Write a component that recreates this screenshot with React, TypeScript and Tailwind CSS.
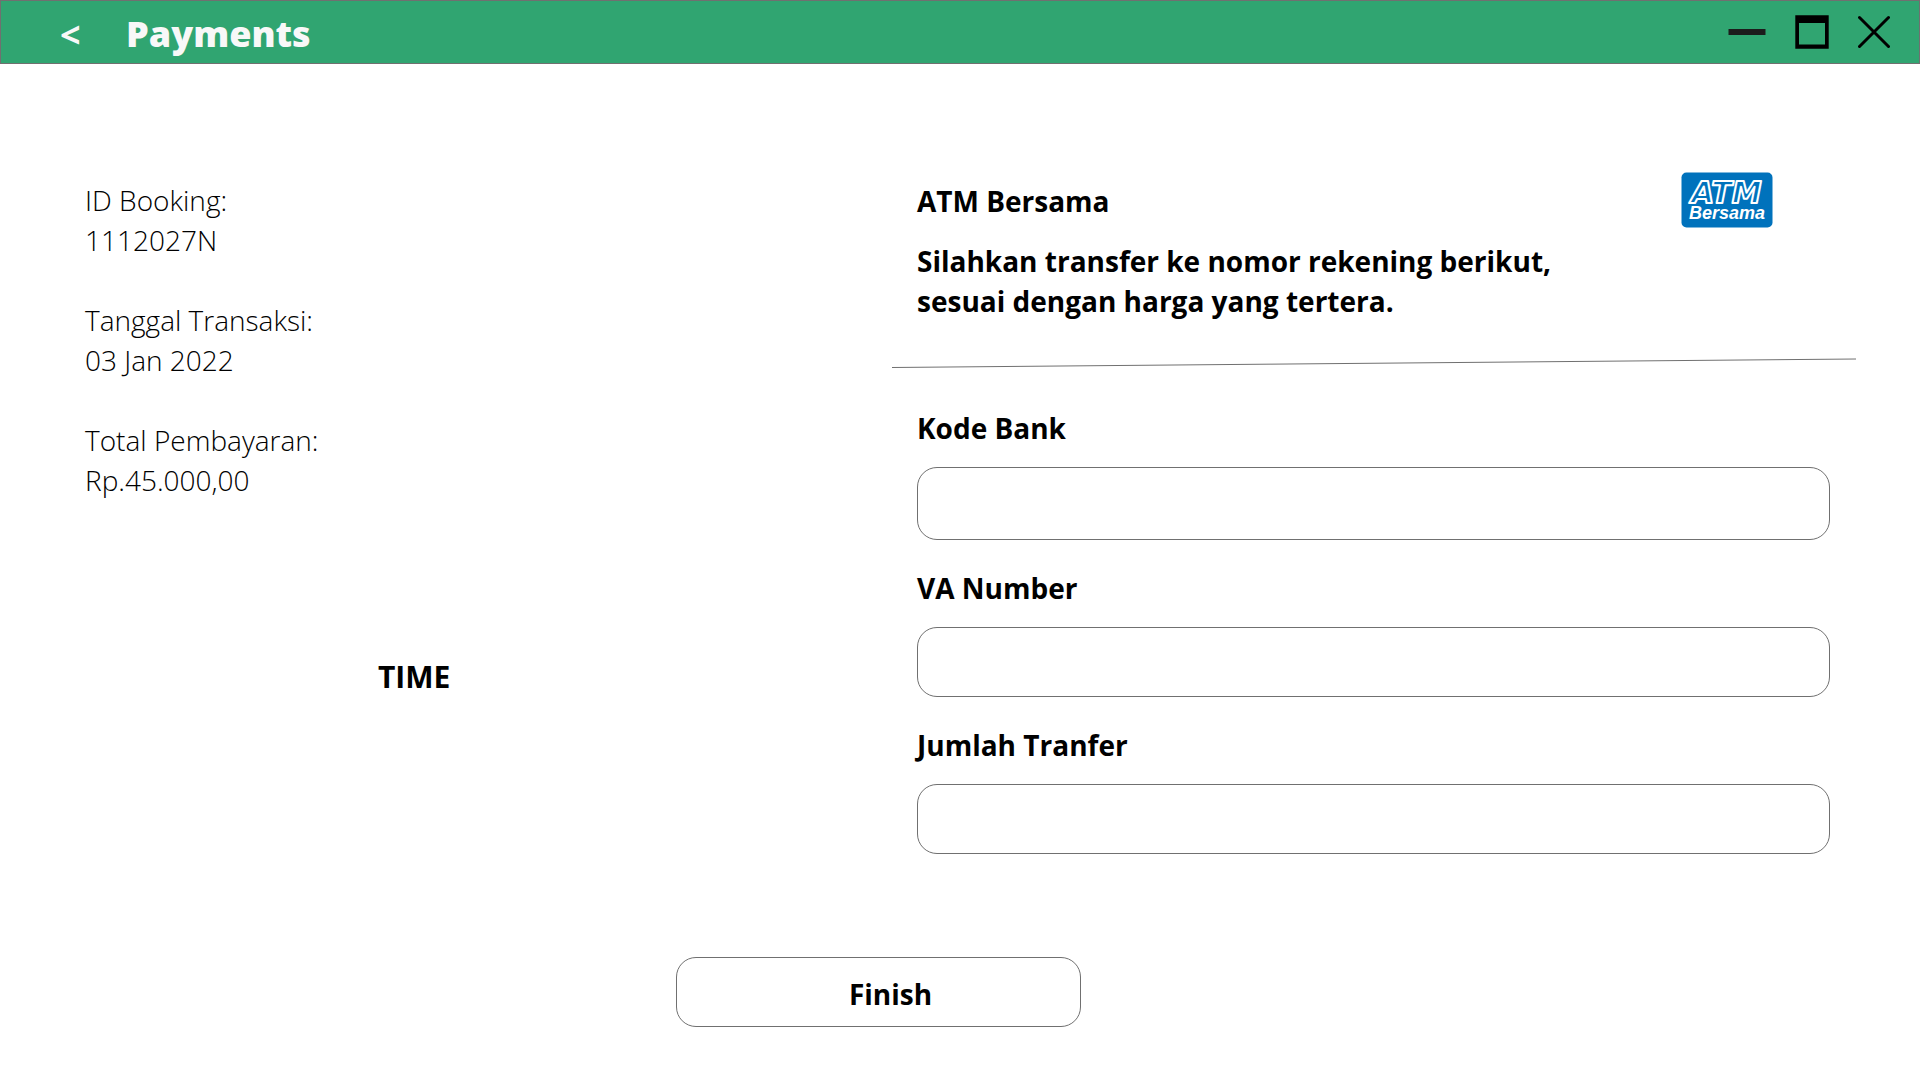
import React from "react";

const details = [
  { label: "ID Booking:", value: "1112027N" },
  { label: "Tanggal Transaksi:", value: "03 Jan 2022" },
  { label: "Total Pembayaran:", value: "Rp.45.000,00" },
];

const fields = [
  { id: "kode-bank", label: "Kode Bank", height: "h-[73px]" },
  { id: "va-number", label: "VA Number", height: "h-[70px]" },
  { id: "jumlah-transfer", label: "Jumlah Tranfer", height: "h-[70px]" },
];

function TitleBar() {
  return (
    <header className="flex h-16 items-center border border-[#707070] bg-[#30a571] pr-[29px] pl-[59px] text-[#f8f8f8]">
      <button type="button" aria-label="Back" className="w-[66px] pt-[6px] text-left text-[36px] leading-10 font-bold">
        &lt;
      </button>
      <h1 className="pt-1 text-[36px] leading-[56px] font-extrabold">Payments</h1>
      <div className="ml-auto flex items-center gap-[29px]">
        <button type="button" aria-label="Minimize">
          <svg width="38" height="34" viewBox="0 0 38 34" className="block">
            <rect x="0.5" y="14" width="37" height="6" fill="#1c1c1c" />
          </svg>
        </button>
        <button type="button" aria-label="Maximize">
          <svg width="34" height="34" viewBox="0 0 34 34" className="block">
            <path fillRule="evenodd" d="M0.3 0.3h33.4v33.4h-33.4zM4 8v21.5h26V8z" fill="#000" />
          </svg>
        </button>
        <button type="button" aria-label="Close">
          <svg width="32" height="34" viewBox="0 0 32 34" className="block">
            <path d="M1.5 2.5l29 29M30.5 2.5l-29 29" fill="none" stroke="#000" strokeWidth="3" strokeLinecap="round" />
          </svg>
        </button>
      </div>
    </header>
  );
}

function BankLogo() {
  return (
    <svg width="92" height="56" viewBox="0 0 92 56" role="img" aria-label="ATM Bersama" className="block">
      <rect x="0.5" y="0.5" width="91" height="55" rx="5" fill="#0072bc" />
      <text
        x="10"
        y="31"
        fontFamily="'DejaVu Sans', sans-serif"
        fontStyle="italic"
        fontWeight="bold"
        fontSize="30"
        fill="#0072bc"
        stroke="#fff"
        strokeWidth="2"
        strokeLinejoin="round"
      >
        ATM
      </text>
      <text
        x="8"
        y="47"
        fontFamily="'Liberation Sans', Arial, sans-serif"
        fontStyle="italic"
        fontWeight="bold"
        fontSize="18"
        fill="#fff"
      >
        Bersama
      </text>
    </svg>
  );
}

export default function App() {
  return (
    <div className="min-h-screen bg-white font-['Open_Sans','Noto_Sans',sans-serif] text-[28px] leading-10 text-black">
      <TitleBar />
      <main>
        <div className="grid grid-cols-[892fr_1028fr]">
          <section className="pt-[116px] pl-[85px]">
            <dl className="flex flex-col gap-10 font-light">
              {details.map((d) => (
                <div key={d.label}>
                  <dt>{d.label}</dt>
                  <dd>{d.value}</dd>
                </div>
              ))}
            </dl>
            <p className="mt-[157px] pl-[293px] text-[30px] font-bold">TIME</p>
          </section>

          <section className="pt-[108px] pr-16">
            <div className="flex items-start justify-between pr-[83px] pl-[25px]">
              <div className="font-bold">
                <h2 className="pt-[9px]">ATM Bersama</h2>
                <p className="mt-5">
                  Silahkan transfer ke nomor rekening berikut,
                  <br />
                  sesuai dengan harga yang tertera.
                </p>
              </div>
              <BankLogo />
            </div>
            <svg viewBox="0 0 964 10" preserveAspectRatio="none" className="mt-[37px] block h-[10px] w-full" aria-hidden="true">
              <line x1="0" y1="9.5" x2="964" y2="1" stroke="#707070" strokeWidth="1" />
            </svg>
            <form className="mt-10 flex flex-col gap-7 pr-[26px] pl-[25px]">
              {fields.map((f) => (
                <div key={f.id} className="flex flex-col gap-[19px]">
                  <label htmlFor={f.id} className="font-bold">
                    {f.label}
                  </label>
                  <input
                    id={f.id}
                    type="text"
                    className={`${f.height} w-full rounded-[20px] border border-[#707070] bg-white px-6`}
                  />
                </div>
              ))}
            </form>
          </section>
        </div>
        <div className="mt-[103px] flex justify-center pr-[163px]">
          <button
            type="button"
            className="h-[70px] w-[405px] rounded-[20px] border border-[#707070] bg-white pt-[3px] pl-6 font-bold"
          >
            Finish
          </button>
        </div>
      </main>
    </div>
  );
}
